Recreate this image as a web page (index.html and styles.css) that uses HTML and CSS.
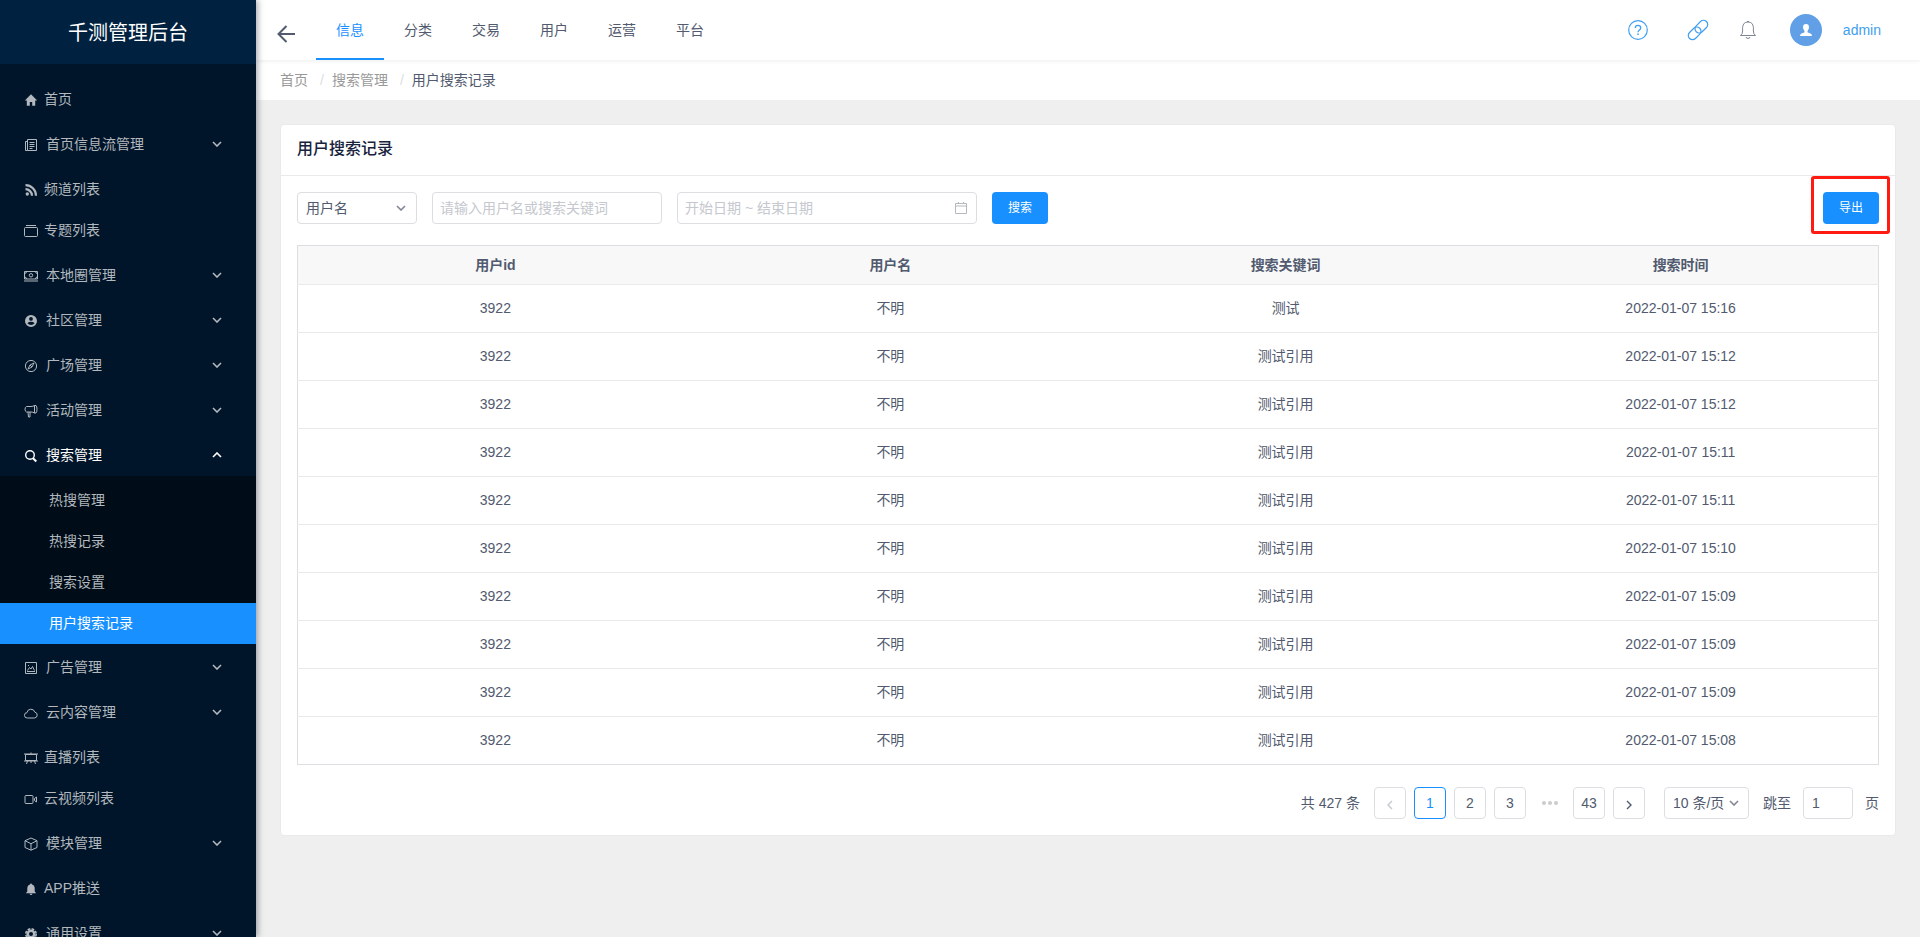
FILE: index.html
```html
<!DOCTYPE html>
<html lang="zh-CN">
<head>
<meta charset="utf-8">
<title>用户搜索记录</title>
<link rel="stylesheet" href="styles.css">
</head>
<body>
<svg class="defs" aria-hidden="true">
  <symbol id="chevron" viewBox="0 0 10 6"><path d="M1 1l4 4 4-4" fill="none" stroke="currentColor" stroke-width="1.6"/></symbol>
</svg>
<div class="layout">
  <aside class="sidebar">
    <div class="brand">千测管理后台</div>
    <nav>
      <ul class="menu">
        <li class="leaf"><a href="#"><svg class="icon" viewBox="0 0 14 14" fill="currentColor"><path d="M7 1.200L.8 7.400h2v5.400h3V9h2.400v3.800h3V7.400h2z"/></svg>首页</a></li>
        <li><button type="button"><svg class="icon" viewBox="0 0 14 14" fill="none" stroke="currentColor"><path d="M3.500 1.500h9v11h-9zM3.500 3.500h-2v9h2M5.500 4.500h5M5.500 6.500h5M5.500 8.500h5M5.500 10.500h3"/></svg>首页信息流管理<svg class="arrow"><use href="#chevron"/></svg></button></li>
        <li class="leaf"><a href="#"><svg class="icon" viewBox="0 0 14 14"><circle cx="3.300" cy="11" r="1.700" fill="currentColor"/><path d="M1.500 6.200a6.500 6.500 0 0 1 6.500 6.500M1.500 2.200a10.500 10.500 0 0 1 10.500 10.500" fill="none" stroke="currentColor" stroke-width="2.200"/></svg>频道列表</a></li>
        <li class="leaf"><a href="#"><svg class="icon" viewBox="0 0 14 14" fill="none" stroke="currentColor"><path d="M2 1.500h10M1.500 3.500h11q1 0 1 1v7q0 1-1 1h-11q-1 0-1-1v-7q0-1 1-1z"/></svg>专题列表</a></li>
        <li><button type="button"><svg class="icon" viewBox="0 0 14 14" fill="none" stroke="currentColor"><path d="M.5 2.500h13v7.500H.5zM0 12h14M.5 4.500q2 0 2-2M13.500 4.500q-2 0-2-2M.5 8q2 0 2 2M13.500 8q-2 0-2 2"/><circle cx="7" cy="6.300" r="1.700"/></svg>本地圈管理<svg class="arrow"><use href="#chevron"/></svg></button></li>
        <li><button type="button"><svg class="icon" viewBox="0 0 14 14" fill="currentColor" fill-rule="evenodd"><path d="M7 1a6 6 0 1 0 0 12A6 6 0 0 0 7 1zM7 3a1.800 1.800 0 0 1 0 3.800A1.800 1.800 0 0 1 7 3zM3.400 9.200Q4.800 7.800 7 7.800t3.600 1.400Q9.200 11 7 11T3.400 9.200z"/></svg>社区管理<svg class="arrow"><use href="#chevron"/></svg></button></li>
        <li><button type="button"><svg class="icon" viewBox="0 0 14 14" fill="none" stroke="currentColor"><circle cx="7" cy="7" r="5.600"/><path d="M10 4L8 8 4 10l2-4zM6 6l2 2"/></svg>广场管理<svg class="arrow"><use href="#chevron"/></svg></button></li>
        <li><button type="button"><svg class="icon" viewBox="0 0 14 14" fill="none" stroke="currentColor"><path d="M2.500 2.500h4.500q2 0 3.500-1v7.500q-1.500-1-3.500-1H2.500Q1 7.500 1 5.300t1.500-2.800zM4 8l.5 5h1.500V8M10.500 1.500h1.500q1 1 1 3.700T12 9h-1.500"/></svg>活动管理<svg class="arrow"><use href="#chevron"/></svg></button></li>
        <li class="open">
          <button type="button" aria-expanded="true"><svg class="icon" viewBox="0 0 14 14" fill="none" stroke="currentColor"><circle cx="6" cy="6" r="4.300" stroke-width="1.400"/><path d="M8.800 9l3.500 3.500" stroke-width="2"/></svg>搜索管理<svg class="arrow"><use href="#chevron"/></svg></button>
          <ul class="submenu">
            <li><a href="#">热搜管理</a></li>
            <li><a href="#">热搜记录</a></li>
            <li><a href="#">搜索设置</a></li>
            <li><a href="#" class="selected" aria-current="page">用户搜索记录</a></li>
          </ul>
        </li>
        <li><button type="button"><svg class="icon" viewBox="0 0 14 14" fill="none" stroke="currentColor"><path d="M1.500 1.500h11v11h-11z"/><path d="M3 10.500h8M3.500 9.500L5.500 6.500 7 8l1.500-2.500 2 4M4 4.500h1"/></svg>广告管理<svg class="arrow"><use href="#chevron"/></svg></button></li>
        <li><button type="button"><svg class="icon" viewBox="0 0 14 14" fill="none" stroke="currentColor"><path d="M3.300 12a2.700 2.700 0 0 1-.3-5.400 4 4 0 0 1 7.800-.5A3 3 0 0 1 10.700 12z"/></svg>云内容管理<svg class="arrow"><use href="#chevron"/></svg></button></li>
        <li class="leaf"><a href="#"><svg class="icon" viewBox="0 0 14 14" fill="none" stroke="currentColor"><path d="M1.500 3.500h11v6h-11zM0 3h14M0 10h14M7 1.500V3M7 10v2M3.500 10l-1 3M10.500 10l1 3"/></svg>直播列表</a></li>
        <li class="leaf"><a href="#"><svg class="icon" viewBox="0 0 14 14" fill="none" stroke="currentColor"><path d="M2 3.500h6q1 0 1 1v6q0 1-1 1H2q-1 0-1-1v-6q0-1 1-1zM10.500 6.500l2-1.500v5l-2-1.500z"/></svg>云视频列表</a></li>
        <li><button type="button"><svg class="icon" viewBox="0 0 14 14" fill="none" stroke="currentColor"><path d="M7 1l6 2.700v6.800L7 13.200l-6-2.700V3.700zM1 3.700l6 3 6-3M7 6.700v6.500"/></svg>模块管理<svg class="arrow"><use href="#chevron"/></svg></button></li>
        <li class="leaf"><a href="#"><svg class="icon" viewBox="0 0 14 14" fill="currentColor"><path d="M7 1.500a1 1 0 0 1 1 .9q2.700.8 2.700 4v3l1.500 1.800H1.800l1.500-1.800v-3q0-3.200 2.700-4a1 1 0 0 1 1-.9zM5.500 11.800h3q-.3 1.200-1.500 1.200t-1.500-1.200z"/></svg>APP推送</a></li>
        <li><button type="button"><svg class="icon" viewBox="0 0 14 14"><circle cx="7" cy="7" r="3.300" fill="none" stroke="currentColor" stroke-width="2.600"/><circle cx="7" cy="7" r="5.200" fill="none" stroke="currentColor" stroke-width="1.600" stroke-dasharray="2.700 1.384"/></svg>通用设置<svg class="arrow"><use href="#chevron"/></svg></button></li>
      </ul>
    </nav>
  </aside>

  <div class="main">
    <header class="topbar">
      <button type="button" class="back" aria-label="返回"><svg viewBox="0 0 18 18" fill="none" stroke="currentColor" stroke-width="2"><path d="M18 9H1.500M9.500 1L1.500 9l8 8"/></svg></button>
      <nav class="tabs">
        <a href="#" class="active">信息</a><a href="#">分类</a><a href="#">交易</a><a href="#">用户</a><a href="#">运营</a><a href="#">平台</a>
      </nav>
      <div class="tools">
        <a href="#" class="help" aria-label="帮助"><svg width="20" height="20" viewBox="0 0 20 20" fill="none" stroke="currentColor" stroke-width="1.200"><circle cx="10" cy="10" r="9.300"/><path d="M7.300 8q0-2.600 2.700-2.600T12.700 8q0 1.200-1.500 2.200Q10 11 10 12.200" stroke-width="1.300"/><path d="M10 13.600V15" stroke-width="1.500"/></svg></a>
        <a href="#" class="link" aria-label="链接"><svg width="20" height="20" viewBox="0 0 20 20" fill="none" stroke="currentColor" stroke-width="1.200"><g transform="rotate(-45 10 10)"><rect x="-2" y="5.800" width="14.500" height="8.400" rx="4.200"/><rect x="7.500" y="5.800" width="14.500" height="8.400" rx="4.200"/></g></svg></a>
        <a href="#" class="bell" aria-label="通知"><svg width="20" height="20" viewBox="0 0 20 20" fill="none" stroke="currentColor"><path d="M2.500 15.500Q4.600 14 4.600 11V7.500Q5 2 10 2t5.400 5.500V11q0 3 2.100 4.500z"/><path d="M8 17q.4 1.500 2 1.500T12 17M9 1.500h2"/></svg></a>
        <span class="avatar"><svg width="14" height="14" viewBox="0 0 14 14" fill="#fff"><path d="M7 1q3 0 3 3.300Q10 6.500 8.500 8v1.200q.5.600 3 1.200 1.500.5 1.500 2.600H1q0-2.100 1.500-2.600 2.500-.6 3-1.200V8Q4 6.500 4 4.300 4 1 7 1z"/></svg></span>
        <a href="#" class="user">admin</a>
      </div>
    </header>
    <nav class="breadcrumb" aria-label="面包屑">
      <a href="#">首页</a><span class="sep">/</span><a href="#">搜索管理</a><span class="sep">/</span><span class="current">用户搜索记录</span>
    </nav>

    <main class="content">
      <section class="card">
        <h1>用户搜索记录</h1>
        <div class="card-body">
          <form class="filters">
            <span class="select-box field-select"><select aria-label="搜索类型"><option>用户名</option></select><svg><use href="#chevron"/></svg></span>
            <input class="keyword" type="text" aria-label="关键词" placeholder="请输入用户名或搜索关键词">
            <span class="date-box"><input type="text" aria-label="日期范围" placeholder="开始日期 ~ 结束日期"><svg width="12" height="12" viewBox="0 0 12 12" fill="none" stroke="currentColor"><path d="M.5 1.500h11v10H.5zM.5 4h11M3.500 0v2M8.500 0v2"/></svg></span>
            <button type="button" class="primary">搜索</button>
            <span class="export"><button type="button" class="primary">导出</button></span>
          </form>
          <table>
            <thead><tr><th>用户id</th><th>用户名</th><th>搜索关键词</th><th>搜索时间</th></tr></thead>
            <tbody>
              <tr><td>3922</td><td>不明</td><td>测试</td><td>2022-01-07 15:16</td></tr>
              <tr><td>3922</td><td>不明</td><td>测试引用</td><td>2022-01-07 15:12</td></tr>
              <tr><td>3922</td><td>不明</td><td>测试引用</td><td>2022-01-07 15:12</td></tr>
              <tr><td>3922</td><td>不明</td><td>测试引用</td><td>2022-01-07 15:11</td></tr>
              <tr><td>3922</td><td>不明</td><td>测试引用</td><td>2022-01-07 15:11</td></tr>
              <tr><td>3922</td><td>不明</td><td>测试引用</td><td>2022-01-07 15:10</td></tr>
              <tr><td>3922</td><td>不明</td><td>测试引用</td><td>2022-01-07 15:09</td></tr>
              <tr><td>3922</td><td>不明</td><td>测试引用</td><td>2022-01-07 15:09</td></tr>
              <tr><td>3922</td><td>不明</td><td>测试引用</td><td>2022-01-07 15:09</td></tr>
              <tr><td>3922</td><td>不明</td><td>测试引用</td><td>2022-01-07 15:08</td></tr>
            </tbody>
          </table>
          <div class="pagination">
            <span class="total">共 427 条</span>
            <div class="pages">
              <button type="button" disabled aria-label="上一页"><svg width="6" height="10" viewBox="0 0 6 10" fill="none" stroke="currentColor" stroke-width="1.400"><path d="M5 1L1 5l4 4"/></svg></button>
              <button type="button" class="current" aria-current="page">1</button>
              <button type="button">2</button>
              <button type="button">3</button>
              <span class="ellipsis"><svg width="16" height="4" viewBox="0 0 16 4" fill="currentColor"><circle cx="2" cy="2" r="2"/><circle cx="8" cy="2" r="2"/><circle cx="14" cy="2" r="2"/></svg></span>
              <button type="button">43</button>
              <button type="button" aria-label="下一页"><svg width="6" height="10" viewBox="0 0 6 10" fill="none" stroke="currentColor" stroke-width="1.400"><path d="M1 1l4 4-4 4"/></svg></button>
            </div>
            <span class="select-box size-select"><select aria-label="每页条数"><option>10 条/页</option></select><svg><use href="#chevron"/></svg></span>
            <label class="jump">跳至<input type="text" value="1">页</label>
          </div>
        </div>
      </section>
    </main>
  </div>
</div>
</body>
</html>
```
FILE: styles.css
```css
* { box-sizing: border-box; }

body {
  margin: 0;
  font: 14px/20px "Liberation Sans", "Noto Sans CJK SC", sans-serif;
  color: #515a6e;
  background: #efefef;
}

a { color: inherit; text-decoration: none; }
ul { margin: 0; padding: 0; list-style: none; }
button, input, select { font: inherit; color: inherit; margin: 0; }
button { cursor: pointer; }
svg { flex: none; }
.defs { display: none; }

.layout { display: flex; height: 100vh; overflow: hidden; }

/* Sidebar */
.sidebar {
  flex: none;
  width: 256px;
  overflow: hidden;
  background: #001529;
  color: #b2b8be;
  box-shadow: 2px 0 6px rgba(0, 21, 41, 0.35);
  z-index: 2;
}
.brand {
  height: 64px;
  line-height: 66px;
  text-align: center;
  font-size: 20px;
  color: #fff;
  background: #002140;
}
.menu { padding-top: 11px; }
.menu > li { margin-top: 4px; }
.menu > .leaf + .leaf { margin-top: 0; }
.menu > .open + li { margin-top: 3px; }
.menu > li > a,
.menu > li > button {
  display: flex;
  align-items: center;
  gap: 8px;
  width: 100%;
  height: 41px;
  padding: 0 34px 2px 24px;
  border: 0;
  background: none;
  text-align: left;
}
.menu > li > a { gap: 6px; padding-bottom: 1px; }
.icon { width: 14px; height: 14px; margin-top: 2px; }
.arrow { width: 10px; height: 6px; margin-left: auto; }
.open > button { color: #fff; }
.open .arrow { transform: rotate(180deg); }
.submenu { padding-top: 4px; background: #000c17; }
.submenu a { display: block; padding-left: 49px; line-height: 41px; }
.submenu .selected { background: #1890ff; color: #fff; }

/* Top bar */
.main { flex: 1; min-width: 0; overflow: auto; }
.topbar {
  position: relative;
  display: flex;
  align-items: center;
  height: 60px;
  padding: 0 39px 0 20px;
  background: #fff;
  box-shadow: 0 1px 4px rgba(0, 21, 41, 0.08);
}
.back { display: flex; margin-right: 20px; padding: 8px 1px 0; border: 0; background: none; }
.back svg { width: 18px; height: 18px; }
.tabs { display: flex; }
.tabs a { padding: 2px 20px 0; line-height: 56px; border-bottom: 2px solid transparent; }
.tabs .active { color: #1890ff; border-color: #1890ff; }
.tools { display: flex; align-items: center; margin-left: auto; color: #409eee; }
.tools a { display: flex; }
.tools svg { overflow: visible; }
.help { margin-right: 40px; }
.link { margin-right: 30px; }
.tools .bell { margin-right: 32px; color: #808695; }
.avatar {
  display: grid;
  place-items: center;
  width: 32px;
  height: 32px;
  margin-right: 21px;
  border-radius: 50%;
  background: #619fe7;
}

.breadcrumb {
  display: flex;
  height: 40px;
  padding-left: 24px;
  line-height: 40px;
  color: #999;
  background: #fff;
}
.sep { margin: 0 8px 0 12px; color: #dcdee2; }
.breadcrumb .current { color: #515a6e; }

/* Card */
.content { padding: 24px; }
.card { border: 1px solid #e8eaec; border-radius: 4px; background: #fff; }
.card h1 {
  margin: 0;
  padding: 0 16px 2px;
  font-size: 16px;
  font-weight: 500;
  line-height: 48px;
  color: #17233d;
  border-bottom: 1px solid #e8eaec;
}
.card-body { padding: 16px; }

.filters { display: flex; gap: 15px; margin-bottom: 21px; }
.filters input,
.select-box select,
.jump input,
.pages button {
  height: 32px;
  border: 1px solid #dcdee2;
  border-radius: 4px;
  background: #fff;
  outline: 0;
}
input::placeholder { color: #c5c8ce; opacity: 1; }
.select-box { position: relative; display: flex; }
.select-box select { width: 100%; padding: 0 8px; appearance: none; }
.select-box svg {
  position: absolute;
  right: 11px;
  top: 13px;
  width: 10px;
  height: 6px;
  color: #808695;
  pointer-events: none;
}
.field-select { width: 120px; }
.keyword { width: 230px; padding: 0 7px; }
.date-box { position: relative; display: flex; width: 300px; }
.date-box input { width: 100%; padding: 0 7px; }
.date-box svg { position: absolute; right: 10px; top: 10px; color: #b5b8bf; }
.primary {
  width: 56px;
  height: 32px;
  padding: 0;
  border: 0;
  border-radius: 4px;
  font-size: 12px;
  color: #fff;
  background: #1890ff;
}
.export { position: relative; margin-left: auto; }
.export::after {
  content: "";
  position: absolute;
  inset: -16px -11px -10px -12px;
  border: 3px solid #ff1a12;
  border-radius: 3px;
  pointer-events: none;
}

table {
  width: 100%;
  table-layout: fixed;
  border-collapse: collapse;
  border: 1px solid #dcdee2;
}
th, td { padding: 0; text-align: center; border-bottom: 1px solid #e8eaec; }
th { height: 39px; background: #f8f8f9; font-weight: 700; }
td { height: 48px; padding-bottom: 2px; }
tbody tr:last-child td { border-bottom-color: #dcdee2; }

.pagination { display: flex; align-items: center; justify-content: flex-end; margin-top: 22px; }
.total { margin-right: 14px; }
.pages { display: flex; gap: 8px; }
.pages button { display: grid; place-items: center; width: 32px; padding: 0; }
.pages button svg { margin-top: 4px; }
.pages button:disabled { color: #c5c8ce; }
.pages .current { color: #1890ff; border-color: #1890ff; }
.ellipsis { display: grid; place-items: center; width: 31px; color: #ccc; }
.size-select { width: 85px; margin: 0 14px 0 19px; }
.size-select svg { right: 10px; }
.jump { display: flex; align-items: center; gap: 12px; }
.jump input { width: 50px; padding: 0 8px; }
```
